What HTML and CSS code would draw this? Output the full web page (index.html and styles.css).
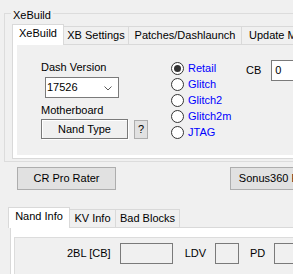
FILE: index.html
```html
<!DOCTYPE html>
<html>
<head>
<meta charset="utf-8">
<link rel="stylesheet" href="styles.css">
</head>
<body>
<div class="form">
  <div class="group">
    <div class="group-title">XeBuild</div>
    <div class="tabctl tabctl1">
      <div class="tabstrip">
        <div class="tab sel w-xebuild">XeBuild</div>
        <div class="tab w-xbset">XB Settings</div>
        <div class="tab w-patch">Patches/Dashlaunch</div>
        <div class="tab w-update">Update Mode</div>
      </div>
      <div class="tabpage page1">
        <div class="panel">
          <div class="col-left">
            <div class="lbl">Dash Version</div>
            <div class="combo">
              <span class="combo-text">17526</span>
              <span class="combo-btn">
                <svg width="8" height="5" viewBox="0 0 8 5"><polyline points="0.5,0.5 4,4 7.5,0.5" fill="none" stroke="#5a5a5a" stroke-width="1"/></svg>
              </span>
            </div>
            <div class="lbl lbl-mb">Motherboard</div>
            <div class="btn-row-small">
              <div class="nand-type">Nand Type</div>
              <div class="qbtn">?</div>
            </div>
          </div>
          <div class="radios">
            <div class="radio-row"><span class="radio checked"></span><span class="radio-text">Retail</span></div>
            <div class="radio-row"><span class="radio"></span><span class="radio-text">Glitch</span></div>
            <div class="radio-row"><span class="radio"></span><span class="radio-text">Glitch2</span></div>
            <div class="radio-row"><span class="radio"></span><span class="radio-text">Glitch2m</span></div>
            <div class="radio-row"><span class="radio"></span><span class="radio-text">JTAG</span></div>
          </div>
          <div class="cb-col">
            <span class="cb-lbl">CB</span>
            <div class="textbox cb-box">0</div>
          </div>
        </div>
      </div>
    </div>
  </div>

  <div class="btnrow">
    <div class="btn btn-cr">CR Pro Rater</div>
    <div class="btn btn-sonus">Sonus360 Editor</div>
  </div>

  <div class="tabctl tabctl2">
    <div class="tabstrip">
      <div class="tab sel w-nand">Nand Info</div>
      <div class="tab w-kv">KV Info</div>
      <div class="tab w-bad">Bad Blocks</div>
    </div>
    <div class="tabpage page2">
      <div class="innerbox">
        <div class="info-row">
          <span class="lbl-2bl">2BL [CB]</span>
          <div class="textbox ro box-2bl"></div>
          <span class="lbl-ldv">LDV</span>
          <div class="textbox ro box-ldv"></div>
          <span class="lbl-pd">PD</span>
          <div class="textbox ro box-pd"></div>
        </div>
      </div>
    </div>
  </div>
</div>
</body>
</html>
```
FILE: styles.css
```css
* { box-sizing: border-box; }
html, body { margin: 0; padding: 0; }
body {
  background: #f0f0f0;
  font-family: "Liberation Sans", Arial, sans-serif;
  font-size: 11px;
  line-height: 13px;
  color: #000;
  width: 293px;
  height: 274px;
  overflow: hidden;
}
.form { width: 420px; display: flex; flex-direction: column; }

/* group box */
.group {
  margin: 13px 0 0 4px;
  border: 1px solid #dcdcdc;
  height: 149px;
  width: 410px;
}
.group-title {
  margin: -5px 0 0 6px;
  padding: 0 2px;
  background: #f0f0f0;
  width: fit-content;
}

/* tab controls */
.tabctl1 { margin: 2px 0 0 7px; }
.tabctl2 { margin: 17px 0 0 10px; }
.tabstrip {
  display: flex;
  align-items: flex-end;
  height: 20px;
  position: relative;
  z-index: 1;
}
.tab {
  height: 18px;
  padding-top: 2px;
  border: 1px solid #d9d9d9;
  border-bottom: none;
  border-left: none;
  background: #f0f0f0;
  text-align: center;
  white-space: nowrap;
  overflow: hidden;
}
.tab.sel {
  height: 21px;
  margin-bottom: -1px;
  background: #fff;
  border-left: 1px solid #d9d9d9;
}
.w-xebuild { width: 52px; }
.w-xbset { width: 65px; }
.w-patch { width: 113px; }
.w-update { width: 80px; text-align: left; padding-left: 7px; }
.w-nand { width: 62px; margin-left: -2px; }
.w-kv { width: 46px; }
.w-bad { width: 64px; }

.tabpage {
  border: 1px solid #d9d9d9;
  background: #fff;
}
.page1 {
  height: 115px;
  width: 400px;
  padding: 0 0 3px 4px;
}
.page2 {
  height: 80px;
  width: 400px;
  padding: 9px 0 0 3px;
}
.panel {
  background: #f0f0f0;
  height: 100%;
  display: flex;
  align-items: flex-start;
}

/* left column */
.col-left {
  padding: 16px 0 0 24px;
  display: flex;
  flex-direction: column;
}
.combo {
  margin: 3px 0 0 4px;
  width: 74px;
  height: 21px;
  border: 1px solid #7a7a7a;
  background: #fff;
  display: flex;
}
.combo-text {
  flex: 1;
  padding: 3px 0 0 1px;
}
.combo-btn {
  width: 20px;
  display: flex;
  align-items: center;
  justify-content: center;
  padding-top: 1px;
}
.combo-btn svg { display: block; }
.lbl-mb { margin-top: 6px; }
.btn-row-small {
  margin-top: 2px;
  display: flex;
  align-items: flex-start;
  gap: 6px;
}
.nand-type {
  width: 87px;
  height: 20px;
  border: 1px solid #7a7a7a;
  box-shadow: 1px 1px 0 #fff, inset 1px 1px 0 #fff;
  background: #f0f0f0;
  display: flex;
  align-items: center;
  justify-content: center;
}
.qbtn {
  margin-top: 1px;
  width: 14px;
  height: 19px;
  border: 1px solid #adadad;
  background: #e1e1e1;
  display: flex;
  align-items: center;
  justify-content: center;
}

/* radios */
.radios {
  margin-left: 23px;
  padding-top: 15px;
  width: 75px;
  display: flex;
  flex-direction: column;
}
.radio-row {
  height: 16px;
  line-height: 16px;
  display: flex;
  align-items: center;
}
.radio {
  width: 13px;
  height: 13px;
  border: 1px solid #333;
  border-radius: 50%;
  background: #fff;
  display: flex;
  align-items: center;
  justify-content: center;
  flex: none;
}
.radio.checked::after {
  content: "";
  width: 7px;
  height: 7px;
  border-radius: 50%;
  background: #333;
}
.radio-text {
  margin-left: 4px;
  color: #0000ff;
}

/* CB */
.cb-col {
  padding-top: 15px;
  display: flex;
  align-items: center;
  height: 36px;
}
.cb-lbl { margin-right: 10px; }
.textbox {
  height: 21px;
  border: 1px solid #7a7a7a;
  background: #fff;
  padding: 3px 0 0 3px;
}
.cb-box { width: 60px; }

/* buttons */
.btnrow {
  margin: 5px 0 0 17px;
  display: flex;
  gap: 114px;
}
.btn {
  height: 23px;
  width: 99px;
  border: 1px solid #adadad;
  background: #e1e1e1;
  display: flex;
  align-items: center;
  justify-content: center;
  white-space: nowrap;
}

/* nand info */
.innerbox {
  border: 1px solid #dcdcdc;
  background: #f0f0f0;
  height: 100px;
}
.info-row {
  padding: 5px 0 0 52px;
  display: flex;
  align-items: center;
  height: 26px;
}
.ro { background: #f0f0f0; }
.box-2bl { width: 53px; margin-left: 9px; }
.lbl-ldv { margin-left: 12px; }
.box-ldv { width: 24px; margin-left: 9px; }
.lbl-pd { margin-left: 11px; }
.box-pd { width: 40px; margin-left: 9px; }
```
